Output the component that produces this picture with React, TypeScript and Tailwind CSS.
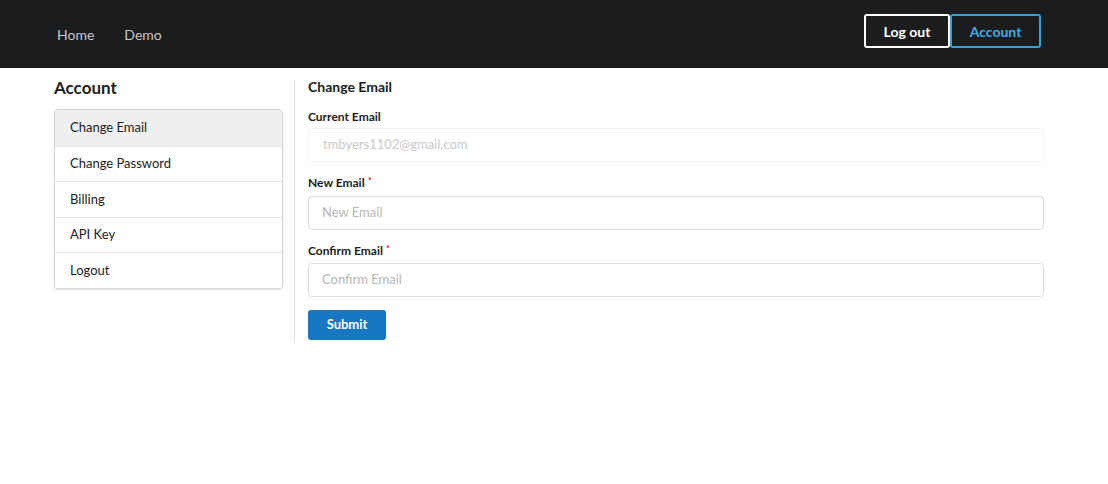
export default function App() {
  const items = ['Change Email', 'Change Password', 'Billing', 'API Key', 'Logout']

  return (
    <div className="min-h-[484px] bg-white text-[#1b1c1d]" style={{ fontFamily: 'Lato, "Open Sans", sans-serif' }}>
      <header className="h-[68px] bg-[#1b1c1d] flex items-center justify-between pl-[57px] pr-[67px]">
        <nav className="flex items-center gap-[30px] text-[14px] text-[#c8c8c8]">
          <span>Home</span>
          <span>Demo</span>
        </nav>
        <div className="flex items-center mb-[6px]">
          <button className="h-[34px] w-[86px] rounded-[3px] border-2 border-white text-white text-[14px] font-bold">
            Log out
          </button>
          <button className="h-[34px] w-[91px] rounded-[3px] border-2 border-[#2ea3e0] text-[#3aaeea] text-[14px] font-bold">
            Account
          </button>
        </div>
      </header>

      <main className="flex pl-[54px] pt-[11px]">
        <aside className="w-[229px] shrink-0 -mt-[1px]">
          <h2 className="text-[17px] font-bold leading-[20px] mb-[11px]">Account</h2>
          <ul className="rounded-[4px] border border-[#d4d4d5] shadow-[0_1px_2px_rgba(34,36,38,0.15)] overflow-hidden">
            {items.map((item, i) => (
              <li
                key={item}
                className={
                  'h-[35.6px] flex items-center pl-[15px] text-[13px] ' +
                  (i > 0 ? 'border-t border-[#e3e3e3] ' : '') +
                  (i === 0 ? 'bg-[#efefef]' : 'bg-white')
                }
              >
                {item}
              </li>
            ))}
          </ul>
        </aside>

        <div className="ml-[11px] w-px bg-[#e0e0e0] h-[263px]" />

        <section className="ml-[13px] w-[736px]">
          <h3 className="text-[14px] font-bold leading-[16px]">Change Email</h3>

          <label className="block text-[12px] font-bold mt-[15px] leading-[14px]">Current Email</label>
          <div className="mt-[4px] h-[34px] rounded-[4px] border border-[#f3f3f3] flex items-center pl-[14px] text-[13px] text-[#c9c9c9]">
            tmbyers1102@gmail.com
          </div>

          <label className="block text-[12px] font-bold mt-[14px] leading-[14px]">
            New Email<span className="text-[#db2828] text-[10px] align-top ml-[3px] relative top-[-3px]">*</span>
          </label>
          <div className="mt-[6px] h-[34px] rounded-[4px] border border-[#dcdcdc] flex items-center pl-[13px] text-[13px] text-[#b5b5b5]">
            New Email
          </div>

          <label className="block text-[12px] font-bold mt-[14px] leading-[14px]">
            Confirm Email<span className="text-[#db2828] text-[10px] align-top ml-[3px] relative top-[-3px]">*</span>
          </label>
          <div className="mt-[5px] h-[34px] rounded-[4px] border border-[#dcdcdc] flex items-center pl-[13px] text-[13px] text-[#b5b5b5]">
            Confirm Email
          </div>

          <button className="mt-[13px] h-[30px] w-[78px] rounded-[3px] bg-[#1678c2] text-white text-[13px] font-bold">
            Submit
          </button>
        </section>
      </main>
    </div>
  )
}
